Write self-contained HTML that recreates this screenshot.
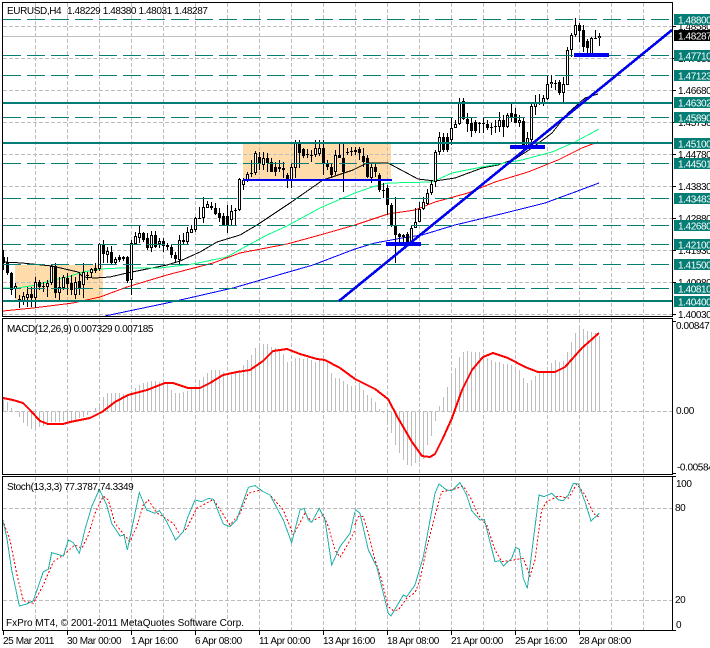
<!DOCTYPE html>
<html><head><meta charset="utf-8"><title>EURUSD,H4</title>
<style>
html,body{margin:0;padding:0;background:#fff}
svg{display:block}
text{font-family:"Liberation Sans",sans-serif;font-size:10px;letter-spacing:-.4px;fill:#000}
.c{shape-rendering:crispEdges}
.lw text{fill:#fff}
</style></head><body>
<svg width="710" height="648" viewBox="0 0 710 648" xmlns="http://www.w3.org/2000/svg">
<rect width="710" height="648" fill="#fff"/>
<!-- background rectangles -->
<g class="c" fill="#ffdcaa">
<rect x="243" y="143" width="148" height="37"/>
<rect x="15" y="265" width="88" height="36"/>
</g>
<!-- grid -->
<g class="c" stroke="#bdbdbd" stroke-width="1" stroke-dasharray="4 2" fill="none">
<path d="M35.5 3V316M67.5 3V316M99.5 3V316M131.5 3V316M163.5 3V316M195.5 3V316M227.5 3V316M259.5 3V316M291.5 3V316M323.5 3V316M355.5 3V316M387.5 3V316M419.5 3V316M451.5 3V316M483.5 3V316M515.5 3V316M547.5 3V316M579.5 3V316M611.5 3V316M643.5 3V316"/>
<path d="M35.5 319V474M67.5 319V474M99.5 319V474M131.5 319V474M163.5 319V474M195.5 319V474M227.5 319V474M259.5 319V474M291.5 319V474M323.5 319V474M355.5 319V474M387.5 319V474M419.5 319V474M451.5 319V474M483.5 319V474M515.5 319V474M547.5 319V474M579.5 319V474M611.5 319V474M643.5 319V474"/>
<path d="M35.5 477V630M67.5 477V630M99.5 477V630M131.5 477V630M163.5 477V630M195.5 477V630M227.5 477V630M259.5 477V630M291.5 477V630M323.5 477V630M355.5 477V630M387.5 477V630M419.5 477V630M451.5 477V630M483.5 477V630M515.5 477V630M547.5 477V630M579.5 477V630M611.5 477V630M643.5 477V630"/>
<path d="M3 26.5H672M3 58.5H672M3 90.5H672M3 122.5H672M3 154.5H672M3 186.5H672M3 218.5H672M3 250.5H672M3 282.5H672M3 314.5H672M3 411.5H672M3 508.5H672M3 600.5H672"/>
</g>
<path class="c" d="M3 36.5H672" stroke="#bdbdbd" fill="none"/>
<!-- moving averages -->
<g class="c" fill="none" stroke-width="1">
<path stroke="#000" d="M3 262L22 263L52 266L78 272L83 277L95 278L110 277L127 273L167 265L180 261L200 252L217 242L240 235L257 225L290 203L323 180L353 170L363 165L367 163L382 163L388 163L418 179L435 181L455 178L482 168L498 165L515 159L532 148L552 133L568 113L585 98L598 94"/>
<path stroke="#00ff7f" d="M3 288L17 288L37 285L53 280L67 277L83 272L100 269L120 268L160 268L193 264L227 257L243 248L267 235L287 226L320 208L343 198L355 193L372 187L388 183L432 182L452 173L482 167L522 160L552 152L575 142L599 129"/>
<path stroke="#f00" d="M3 311L33 308L73 303L100 297L127 287L167 275L213 263L240 253L287 244L320 235L355 225L388 214L415 210L435 202L468 193L495 182L528 172L558 160L582 148L598 142"/>
<path stroke="#00f" d="M105 316L167 303L233 288L313 265L355 249L375 243L402 238L422 235L455 225L505 213L545 203L575 192L599 183"/>
</g>
<!-- candles: wicks -->
<path class="c" fill="none" stroke="#000" d="M3.5 250V270M7.5 257V275M11.5 272V295M15.5 283V298M19.5 295V308M23.5 292V305M27.5 287V307M31.5 287V307M35.5 277V308M39.5 280V290M43.5 282V292M47.5 280V297M51.5 265V285M55.5 263V298M59.5 277V300M63.5 275V290M67.5 273V295M71.5 275V295M75.5 277V299M79.5 272V295M83.5 263V298M87.5 272V280M91.5 268V277M95.5 263V273M99.5 243V271M103.5 240V263M107.5 247V263M111.5 246V265M115.5 257V265M119.5 255V262M123.5 256V261M127.5 256V283M131.5 240V295M135.5 232V245M139.5 225V243M143.5 232V242M147.5 233V250M151.5 231V252M155.5 231V248M159.5 238V248M163.5 238V252M167.5 243V250M171.5 245V258M175.5 252V262M179.5 235V265M183.5 233V245M187.5 227V245M191.5 225V233M195.5 217V232M199.5 207V219M203.5 197V223M207.5 201V208M211.5 202V210M215.5 203V215M219.5 208V222M223.5 213V225M227.5 205V233M231.5 205V225M235.5 208V225M239.5 178V211M243.5 178V190M247.5 172V182M251.5 160V177M255.5 151V175M259.5 152V170M263.5 152V170M267.5 153V172M271.5 158V172M275.5 162V176M279.5 160V172M283.5 162V178M287.5 173V188M291.5 164V188M295.5 140V178M299.5 140V168M303.5 148V158M307.5 149V158M311.5 150V162M315.5 140V157M319.5 140V156M323.5 140V175M327.5 160V170M331.5 163V178M335.5 150V175M339.5 143V158M343.5 143V192M347.5 148V155M351.5 147V156M355.5 147V155M359.5 147V160M363.5 148V167M367.5 155V178M371.5 164V183M375.5 163V177M379.5 173V192M383.5 183V198M387.5 185V215M391.5 203V227M395.5 197V263M399.5 233V245M403.5 234V245M407.5 232V246M411.5 225V246M415.5 208V228M419.5 202V222M423.5 197V210M427.5 189V205M431.5 180V195M435.5 150V187M439.5 132V155M443.5 133V152M447.5 133V152M451.5 118V145M455.5 120V128M459.5 98V125M463.5 98V120M467.5 113V132M471.5 117V137M475.5 120V133M479.5 122V133M483.5 117V133M487.5 120V130M491.5 123V135M495.5 120V133M499.5 112V132M503.5 115V137M507.5 113V128M511.5 103V122M515.5 108V123M519.5 115V127M523.5 118V150M527.5 132V147M531.5 103V145M535.5 95V115M539.5 94V105M543.5 95V106M547.5 75V100M551.5 75V88M555.5 80V90M559.5 80V95M563.5 77V103M567.5 47V85M571.5 33V57M575.5 18V37M579.5 23V42M583.5 25V52M587.5 39V55M591.5 37V55M595.5 30V39M599.5 33V46"/>
<!-- candle bodies -->
<path class="c" fill="none" stroke="#000" stroke-width="3" d="M3.5 257V263M7.5 262V273M11.5 273V290M15.5 286V289M19.5 299V302M23.5 296V301M27.5 294V298M31.5 294V298M35.5 282V298M39.5 282V287M43.5 286V287M47.5 283V287M51.5 266V283M55.5 266V293M59.5 287V293M63.5 277V288M67.5 278V284M71.5 283V290M75.5 282V295M79.5 281V288M83.5 272V285M87.5 275V276M91.5 269V273M95.5 268V271M99.5 244V269M103.5 244V254M107.5 251V255M111.5 252V263M115.5 259V263M119.5 257V260M123.5 257V259M127.5 257V281M131.5 243V280M135.5 236V244M139.5 233V238M143.5 233V240M147.5 238V248M151.5 235V248M155.5 235V247M159.5 241V244M163.5 241V246M167.5 245V247M171.5 247V255M175.5 255V259M179.5 240V260M183.5 240V242M187.5 232V242M191.5 229V233M195.5 218V230M199.5 218V219M203.5 207V218M207.5 204V208M211.5 206V208M215.5 208V214M219.5 213V218M223.5 216V225M227.5 216V225M231.5 211V220M235.5 210V211M239.5 179V210M243.5 180V185M247.5 174V180M251.5 173V174M255.5 153V173M259.5 157V163M263.5 158V165M267.5 158V163M271.5 162V172M275.5 167V172M279.5 167V169M283.5 168V170M287.5 175V179M291.5 167V180M295.5 143V168M299.5 142V153M303.5 149V156M307.5 154V155M311.5 155V156M315.5 148V155M319.5 148V154M323.5 148V164M327.5 163V167M331.5 167V175M335.5 155V172M339.5 155V158M343.5 158V172M347.5 152V153M351.5 151V152M355.5 150V152M359.5 149V153M363.5 156V162M367.5 158V177M371.5 167V178M375.5 167V172M379.5 175V190M383.5 190V191M387.5 188V205M391.5 205V226M395.5 225V235M399.5 234V237M403.5 235V237M407.5 234V242M411.5 228V243M415.5 222V228M419.5 209V222M423.5 202V209M427.5 193V204M431.5 184V193M435.5 152V182M439.5 137V152M443.5 137V150M447.5 137V150M451.5 128V140M455.5 124V128M459.5 102V124M463.5 101V119M467.5 119V124M471.5 123V131M475.5 122V131M479.5 123V124M483.5 123V124M487.5 124V128M491.5 127V128M495.5 126V127M499.5 120V127M503.5 120V127M507.5 115V127M511.5 113V117M515.5 114V123M519.5 120V123M523.5 121V148M527.5 138V147M531.5 106V140M535.5 103V107M539.5 103V104M543.5 98V103M547.5 84V99M551.5 82V84M555.5 83V84M559.5 82V93M563.5 84V93M567.5 50V85M571.5 35V50M575.5 25V35M579.5 25V31M583.5 30V47M587.5 41V48M591.5 38V54M595.5 38V39M599.5 36V38"/>
<path class="c" fill="none" stroke="#fff" d="M15.5 287V288M19.5 300V301M23.5 297V300M27.5 295V297M35.5 283V297M47.5 284V286M51.5 267V282M59.5 288V292M63.5 278V287M75.5 283V294M83.5 273V284M91.5 270V272M99.5 245V268M107.5 252V254M115.5 260V262M131.5 244V279M135.5 237V243M139.5 234V237M151.5 236V247M159.5 242V243M179.5 241V259M187.5 233V241M191.5 230V232M195.5 219V229M203.5 208V217M207.5 205V207M231.5 212V219M239.5 180V209M243.5 181V184M247.5 175V179M255.5 154V172M263.5 159V164M291.5 168V179M295.5 144V167M315.5 149V154M319.5 149V153M335.5 156V171M371.5 168V177M411.5 229V242M415.5 223V227M419.5 210V221M423.5 203V208M427.5 194V203M431.5 185V192M435.5 153V181M439.5 138V151M451.5 129V139M455.5 125V127M459.5 103V123M499.5 121V126M507.5 116V126M519.5 121V122M527.5 139V146M531.5 107V139M535.5 104V106M543.5 99V102M547.5 85V98M551.5 83V83.5M563.5 85V92M567.5 51V84M571.5 36V49M575.5 26V34M591.5 39V53M599.5 37V37.5"/>
<!-- teal lines -->
<g class="c" fill="none" stroke="#047d75">
<path stroke-dasharray="18 6" d="M3 19.5H672M3 55.5H672M3 75.5H672M3 117.5H672M3 163.5H672M3 198.5H672M3 225.5H672M3 244.5H672M3 264.5H672M3 288.5H672"/>
<path stroke-width="2" d="M3 103H672M3 143H672M3 301H672"/>
</g>
<!-- blue objects -->
<path class="c" fill="none" stroke="#0000f0" stroke-width="2.6" d="M339 301L672 30"/>
<g class="c" fill="#0000f0">
<rect x="574" y="53" width="35" height="4"/>
<rect x="510" y="145" width="35" height="4"/>
<rect x="243" y="179" width="149" height="2"/>
<rect x="386" y="242" width="35" height="4"/>
</g>
<!-- MACD bars -->
<path class="c" fill="none" stroke="#bdbdbd" d="M3.5 411.5V398M7.5 411.5V402M11.5 411.5V408M15.5 411.5V411M19.5 411.5V417M23.5 411.5V423M27.5 411.5V426M31.5 411.5V429M35.5 411.5V428M39.5 411.5V427M43.5 411.5V426M47.5 411.5V423M51.5 411.5V422M55.5 411.5V422M59.5 411.5V422M63.5 411.5V421M67.5 411.5V421M71.5 411.5V422M75.5 411.5V420M79.5 411.5V418M83.5 411.5V417M87.5 411.5V415M91.5 411.5V412M95.5 411.5V408M99.5 411.5V405M103.5 411.5V397M107.5 411.5V393M111.5 411.5V393M115.5 411.5V393M119.5 411.5V393M123.5 411.5V394M127.5 411.5V395M131.5 411.5V393M135.5 411.5V388M139.5 411.5V385M143.5 411.5V383M147.5 411.5V382M151.5 411.5V381M155.5 411.5V381M159.5 411.5V382M163.5 411.5V382M167.5 411.5V383M171.5 411.5V390M175.5 411.5V393M179.5 411.5V393M183.5 411.5V392M187.5 411.5V391M191.5 411.5V387M195.5 411.5V385M199.5 411.5V380M203.5 411.5V377M207.5 411.5V373M211.5 411.5V370M215.5 411.5V370M219.5 411.5V370M223.5 411.5V372M227.5 411.5V376M231.5 411.5V375M235.5 411.5V372M239.5 411.5V370M243.5 411.5V365M247.5 411.5V360M251.5 411.5V355M255.5 411.5V348M259.5 411.5V344M263.5 411.5V344M267.5 411.5V344M271.5 411.5V347M275.5 411.5V348M279.5 411.5V350M283.5 411.5V354M287.5 411.5V362M291.5 411.5V362M295.5 411.5V358M299.5 411.5V358M303.5 411.5V359M307.5 411.5V358M311.5 411.5V360M315.5 411.5V362M319.5 411.5V360M323.5 411.5V360M327.5 411.5V363M331.5 411.5V373M335.5 411.5V378M339.5 411.5V378M343.5 411.5V381M347.5 411.5V384M351.5 411.5V386M355.5 411.5V385M359.5 411.5V383M363.5 411.5V390M367.5 411.5V395M371.5 411.5V398M375.5 411.5V402M379.5 411.5V409M383.5 411.5V413M387.5 411.5V425M391.5 411.5V433M395.5 411.5V445M399.5 411.5V453M403.5 411.5V460M407.5 411.5V465M411.5 411.5V466M415.5 411.5V463M419.5 411.5V462M423.5 411.5V459M427.5 411.5V445M431.5 411.5V436M435.5 411.5V421M439.5 411.5V406M443.5 411.5V397M447.5 411.5V387M451.5 411.5V374M455.5 411.5V368M459.5 411.5V357M463.5 411.5V352M467.5 411.5V351M471.5 411.5V352M475.5 411.5V352M479.5 411.5V352M483.5 411.5V354M487.5 411.5V358M491.5 411.5V360M495.5 411.5V362M499.5 411.5V362M503.5 411.5V364M507.5 411.5V364M511.5 411.5V365M515.5 411.5V367M519.5 411.5V370M523.5 411.5V378M527.5 411.5V383M531.5 411.5V380M535.5 411.5V376M539.5 411.5V372M543.5 411.5V372M547.5 411.5V370M551.5 411.5V363M555.5 411.5V360M559.5 411.5V362M563.5 411.5V361M567.5 411.5V352M571.5 411.5V342M575.5 411.5V333M579.5 411.5V327M583.5 411.5V329M587.5 411.5V331M591.5 411.5V332M595.5 411.5V333M599.5 411.5V336"/>
<!-- MACD signal -->
<path class="c" fill="none" stroke="#f00" stroke-width="2" stroke-linejoin="round" d="M3 398L13 400L23 403L30 410L40 421L48 424L63 424L70 422L90 418L102 412L115 402L128 395L147 390L165 383L173 383L188 388L200 388L210 383L223 375L237 372L250 370L263 361L273 351L287 349L300 354L317 359L325 360L340 368L355 379L375 389L388 399L398 418L412 442L422 456L430 457L435 454L443 438L452 418L462 390L472 370L483 357L493 353L508 358L525 367L538 372L555 372L565 367L582 348L599 333"/>
<!-- Stochastic -->
<g class="c" fill="none" stroke-width="3">
<g transform="translate(0 470) scale(.33333)">
<path stroke="#f00" stroke-dasharray="6 6" d="M8 150L30 210L50 310L70 392L100 400L130 345L160 275L190 255L225 225L245 235L265 195L285 130L310 78L325 90L345 160L365 185L390 215L410 170L430 105L445 90L470 128L520 160L540 195L560 175L590 115L640 88L690 165L720 130L745 70L780 60L810 75L850 120L880 195L915 130L935 155L970 135L985 170L1005 240L1020 262L1045 220L1065 180"/>
<path stroke="#20b2aa" d="M8 150L20 200L35 300L58 408L80 402L100 392L130 305L145 298L155 248L190 258L205 210L220 218L238 250L255 178L275 110L298 58L320 105L335 160L360 198L372 195L382 240L418 68L440 120L465 130L478 122L500 155L527 210L550 185L562 145L585 90L605 95L625 85L640 88L670 162L690 170L710 150L745 52L765 47L790 65L810 75L850 150L875 218L900 120L912 115L925 150L935 157L958 115L975 150L995 285L1020 230L1050 190L1065 125"/>
</g>
<g transform="translate(355 470) scale(.33333)">
<path stroke="#f00" stroke-dasharray="6 6" d="M0 165L10 140L25 140L40 190L60 270L80 330L100 410L115 422L130 420L155 385L180 368L195 330L215 235L235 155L260 65L290 60L325 48L345 80L370 135L395 165L420 240L440 275L475 270L505 265L525 318L540 270L560 120L575 95L610 78L640 85L665 42L690 75L715 130L733 142"/>
<path stroke="#20b2aa" d="M0 118L15 130L40 240L65 290L100 430L108 438L145 375L155 380L180 345L205 260L240 70L252 42L275 60L290 62L315 38L335 75L350 122L375 150L388 148L420 275L435 272L445 288L470 265L482 232L493 238L505 325L517 355L530 250L552 75L567 80L590 70L610 90L625 92L640 75L655 40L670 42L690 95L708 153L733 130"/>
</g>
</g>
<!-- pane borders -->
<g class="c" fill="none" stroke="#000">
<rect x="2.5" y="2.5" width="670" height="314"/>
<rect x="2.5" y="318.5" width="670" height="156"/>
<rect x="2.5" y="476.5" width="670" height="154"/>
<path d="M672 26.5h4M672 58.5h4M672 90.5h4M672 122.5h4M672 154.5h4M672 186.5h4M672 218.5h4M672 250.5h4M672 282.5h4M672 314.5h4M672 321.5h4M672 473.5h4M672 476.5h4M672 630.5h4"/>
<path d="M3.5 631V635M67.5 631V635M131.5 631V635M195.5 631V635M259.5 631V635M323.5 631V635M387.5 631V635M451.5 631V635M515.5 631V635M579.5 631V635"/>
</g>
<!-- price scale plain labels -->
<g>
<text x="678" y="30">1.48580</text>
<text x="678" y="62">1.47680</text>
<text x="678" y="94">1.46680</text>
<text x="678" y="126">1.45730</text>
<text x="678" y="158">1.44780</text>
<text x="678" y="190">1.43830</text>
<text x="678" y="222">1.42880</text>
<text x="678" y="254">1.41930</text>
<text x="678" y="286">1.40980</text>
<text x="678" y="318">1.40030</text>
</g>
<!-- price scale boxes -->
<g class="c" fill="#047d75">
<rect x="674" y="14" width="36" height="11"/>
<rect x="674" y="50" width="36" height="11"/>
<rect x="674" y="70" width="36" height="11"/>
<rect x="674" y="97" width="36" height="11"/>
<rect x="674" y="112" width="36" height="11"/>
<rect x="674" y="138" width="36" height="11"/>
<rect x="674" y="158" width="36" height="11"/>
<rect x="674" y="193" width="36" height="11"/>
<rect x="674" y="220" width="36" height="11"/>
<rect x="674" y="239" width="36" height="11"/>
<rect x="674" y="259" width="36" height="11"/>
<rect x="674" y="283" width="36" height="11"/>
<rect x="674" y="296" width="36" height="11"/>
<rect x="674" y="30" width="36" height="11" fill="#000"/>
</g>
<g class="lw">
<text x="678" y="23.5">1.48800</text>
<text x="678" y="39.5">1.48287</text>
<text x="678" y="59.5">1.47710</text>
<text x="678" y="79.5">1.47123</text>
<text x="678" y="106.5">1.46302</text>
<text x="678" y="121.5">1.45890</text>
<text x="678" y="147.5">1.45100</text>
<text x="678" y="167.5">1.44501</text>
<text x="678" y="202.5">1.43483</text>
<text x="678" y="229.5">1.42680</text>
<text x="678" y="248.5">1.42100</text>
<text x="678" y="268.5">1.41500</text>
<text x="678" y="292.5">1.40810</text>
<text x="678" y="305.5">1.40400</text>
</g>
<!-- indicator scale labels -->
<text x="676" y="329">0.00847</text>
<text x="676" y="414">0.00</text>
<text x="677" y="470.5">-0.00584</text>
<text x="676" y="487">100</text>
<text x="675" y="511">80</text>
<text x="675" y="603">20</text>
<text x="676" y="628">0</text>
<!-- titles -->
<text x="7" y="14">EURUSD,H4</text>
<text x="67" y="14">1.48229 1.48380 1.48031 1.48287</text>
<text x="7" y="332">MACD(12,26,9) 0.007329 0.007185</text>
<text x="7" y="490">Stoch(13,3,3) 77.3787,74.3349</text>
<text x="6" y="626" style="letter-spacing:-.02px">FxPro MT4, © 2001-2011 MetaQuotes Software Corp.</text>
<!-- time axis -->
<g>
<text x="3" y="644">25 Mar 2011</text>
<text x="67" y="644">30 Mar 00:00</text>
<text x="131" y="644">1 Apr 16:00</text>
<text x="195" y="644">6 Apr 08:00</text>
<text x="259" y="644">11 Apr 00:00</text>
<text x="323" y="644">13 Apr 16:00</text>
<text x="387" y="644">18 Apr 08:00</text>
<text x="451" y="644">21 Apr 00:00</text>
<text x="515" y="644">25 Apr 16:00</text>
<text x="579" y="644">28 Apr 08:00</text>
</g>
</svg>
</body></html>
